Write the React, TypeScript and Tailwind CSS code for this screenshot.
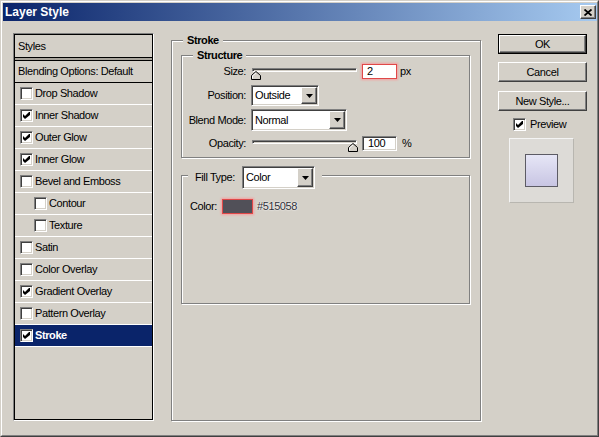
import React from 'react';

const sunken =
  'border border-t-[#808080] border-l-[#808080] border-r-white border-b-white shadow-[inset_1px_1px_0_#404040,inset_-1px_-1px_0_#d4d0c8]';
const raised =
  'border border-t-white border-l-white border-r-[#404040] border-b-[#404040] shadow-[inset_-1px_-1px_0_#808080]';
const groupBox =
  'relative border border-[#808080] shadow-[1px_1px_0_#ffffff,inset_1px_1px_0_#ffffff]';

function Check({ checked }: { checked: boolean }) {
  return (
    <span className={`w-[13px] h-[13px] shrink-0 bg-white flex items-center justify-center ${sunken}`}>
      {checked && (
        <svg width="7" height="7" viewBox="0 0 7 7" className="block">
          <polygon points="0,2 2,4 6,0 7,0 7,3 2,7 0,5" fill="#000" />
        </svg>
      )}
    </span>
  );
}

function Arrow() {
  return (
    <span className={`w-[16px] h-full shrink-0 flex items-center justify-center bg-[#d4d0c8] ${raised}`}>
      <svg width="7" height="4" viewBox="0 0 7 4" className="block">
        <polygon points="0,0 7,0 3.5,4" fill="#000" />
      </svg>
    </span>
  );
}

function Slider({ right }: { right: boolean }) {
  return (
    <div className="relative w-[107px] h-[15px] shrink-0">
      <div className="mt-[7px] mx-[1px] h-[4px] border border-t-[#808080] border-l-[#808080] border-r-white border-b-white bg-[#d4d0c8] shadow-[inset_1px_1px_0_#404040]" />
      <svg
        className={right ? 'absolute right-0 top-[3px] block' : 'absolute left-0 top-[3px] block'}
        width="10"
        height="9"
        viewBox="0 0 10 9"
      >
        <polygon points="0.5,8.5 0.5,4.5 5,0.5 9.5,4.5 9.5,8.5" fill="#d4d0c8" stroke="#000" />
        <polyline points="1.5,7.5 1.5,4.9 5,1.9" fill="none" stroke="#fff" />
      </svg>
    </div>
  );
}

const layers: { label: string; checked: boolean; indent?: boolean; selected?: boolean }[] = [
  { label: 'Drop Shadow', checked: false },
  { label: 'Inner Shadow', checked: true },
  { label: 'Outer Glow', checked: true },
  { label: 'Inner Glow', checked: true },
  { label: 'Bevel and Emboss', checked: false },
  { label: 'Contour', checked: false, indent: true },
  { label: 'Texture', checked: false, indent: true },
  { label: 'Satin', checked: false },
  { label: 'Color Overlay', checked: false },
  { label: 'Gradient Overlay', checked: true },
  { label: 'Pattern Overlay', checked: false },
  { label: 'Stroke', checked: true, selected: true },
];

export default function App() {
  return (
    <div className="w-[599px] h-[437px] overflow-hidden bg-[#d4d0c8] border border-t-[#d4d0c8] border-l-[#d4d0c8] border-r-[#404040] border-b-[#404040] font-['Liberation_Sans',Arial,sans-serif] text-[11px] leading-none tracking-[-0.4px] text-black">
      <div className="w-full h-full border border-t-white border-l-white border-r-[#808080] border-b-[#808080] pt-[1px] pl-[1px]">
        {/* Title bar */}
        <div className="h-[18px] flex items-center justify-between pl-[2px] pr-[1px] bg-[linear-gradient(to_right,#0a246a,#a6caf0)]">
          <span className="text-white font-bold text-[12px] tracking-normal">Layer Style</span>
          <span className={`w-[16px] h-[14px] bg-[#d4d0c8] flex items-center justify-center ${raised}`}>
            <svg width="8" height="7" viewBox="0 0 8 7" className="block">
              <path d="M0.5 0.5 L7.5 6.5 M7.5 0.5 L0.5 6.5" stroke="#000" strokeWidth="1.8" />
            </svg>
          </span>
        </div>

        {/* Body */}
        <div className="flex items-start pl-[10px]">
          {/* Styles list */}
          <div className="mt-[12px] w-[141px] h-[388px] shrink-0 border border-t-[#808080] border-l-[#808080] border-r-white border-b-white">
            <div className="w-full h-full border border-black flex flex-col">
              <div className="h-[23px] shrink-0 flex items-center pl-[3px] border-b border-black">Styles</div>
              <div className="h-[2px] shrink-0 bg-[#a8a49c]" />
              <div className="h-[23px] shrink-0 flex items-center pl-[3px] border-t border-b border-black">
                Blending Options: Default
              </div>
              {layers.map((l) => (
                <div
                  key={l.label}
                  className={`h-[22px] shrink-0 flex items-center gap-[2px] border-b border-white ${
                    l.indent ? 'pl-[19px]' : 'pl-[5px]'
                  } ${l.selected ? 'bg-[#0a246a] text-white font-bold' : ''}`}
                >
                  <Check checked={l.checked} />
                  <span>{l.label}</span>
                </div>
              ))}
            </div>
          </div>

          {/* Stroke group */}
          <div className={`mt-[19px] ml-[17px] w-[310px] h-[381px] shrink-0 pt-[14px] pl-[9px] ${groupBox}`}>
            <span className="absolute left-[11px] top-[-7px] bg-[#d4d0c8] px-[4px] font-bold leading-[13px]">Stroke</span>

            {/* Structure */}
            <div className={`w-[289px] h-[103px] pt-[8px] flex flex-col ${groupBox}`}>
              <span className="absolute left-[11px] top-[-7px] bg-[#d4d0c8] px-[4px] font-bold leading-[13px]">
                Structure
              </span>

              <div className="h-[15px] flex items-center">
                <span className="w-[64px] text-right shrink-0">Size:</span>
                <div className="ml-[5px]">
                  <Slider right={false} />
                </div>
                <div className="ml-[4px] w-[35px] h-[15px] bg-white flex items-center pl-[4px] border border-[#e04848] shadow-[0_0_2px_1px_#f4a0a0]">
                  2
                </div>
                <span className="ml-[3px]">px</span>
              </div>

              <div className="mt-[6px] h-[21px] flex items-center">
                <span className="w-[64px] text-right shrink-0">Position:</span>
                <div className={`ml-[5px] w-[68px] h-[21px] bg-white flex p-[1px] ${sunken}`}>
                  <span className="flex-1 flex items-center pl-[2px]">Outside</span>
                  <Arrow />
                </div>
              </div>

              <div className="mt-[3px] h-[22px] flex items-center">
                <span className="w-[64px] text-right shrink-0">Blend Mode:</span>
                <div className={`ml-[5px] w-[96px] h-[22px] bg-white flex p-[1px] ${sunken}`}>
                  <span className="flex-1 flex items-center pl-[2px]">Normal</span>
                  <Arrow />
                </div>
              </div>

              <div className="mt-[5px] h-[15px] flex items-center">
                <span className="w-[64px] text-right shrink-0">Opacity:</span>
                <div className="ml-[5px]">
                  <Slider right={true} />
                </div>
                <div className={`ml-[4px] w-[35px] h-[15px] bg-white flex items-center pl-[5px] ${sunken}`}>100</div>
                <span className="ml-[5px]">%</span>
              </div>
            </div>

            {/* Fill type */}
            <div className={`mt-[17px] w-[289px] h-[129px] pt-[23px] pl-[8px] ${groupBox}`}>
              <div className="absolute left-[6px] top-[-10px] h-[23px] bg-[#d4d0c8] pl-[7px] pr-[7px] flex items-center">
                <span className="w-[47px] shrink-0">Fill Type:</span>
                <div className={`w-[73px] h-[23px] bg-white flex p-[1px] ${sunken}`}>
                  <span className="flex-1 flex items-center pl-[2px]">Color</span>
                  <Arrow />
                </div>
              </div>
              <div className="h-[15px] flex items-center">
                <span className="w-[32px] shrink-0">Color:</span>
                <span className="w-[31px] h-[15px] bg-[#515058] border border-[#e04848] shadow-[0_0_2px_1px_#f4a0a0]" />
                <span className="ml-[4px] text-[#2e2e36] [text-shadow:0_0_2px_#ffffff,0_0_1px_#ffffff]">#515058</span>
              </div>
            </div>
          </div>

          {/* Right column */}
          <div className="mt-[13px] ml-[17px] w-[89px] shrink-0 flex flex-col">
            <div className="h-[20px] border border-black">
              <div className={`w-full h-full bg-[#d4d0c8] flex items-center justify-center ${raised}`}>OK</div>
            </div>
            <div className={`mt-[8px] h-[20px] bg-[#d4d0c8] flex items-center justify-center ${raised}`}>Cancel</div>
            <div className={`mt-[9px] h-[20px] bg-[#d4d0c8] flex items-center justify-center ${raised}`}>New Style...</div>
            <div className="mt-[7px] h-[13px] flex items-center pl-[15px] gap-[4px]">
              <Check checked={true} />
              <span>Preview</span>
            </div>
            <div className="mt-[7px] ml-[11px] w-[65px] h-[65px] bg-[#dddbd7] border border-t-[#f4f4f4] border-l-[#f4f4f4] border-r-[#b8b6b0] border-b-[#b8b6b0] flex items-center justify-center">
              <div className="w-[33px] h-[33px] border border-[#5c5b64] bg-[linear-gradient(to_bottom,#e6e6f6,#c8c5e3)]" />
            </div>
          </div>
        </div>
      </div>
    </div>
  );
}
